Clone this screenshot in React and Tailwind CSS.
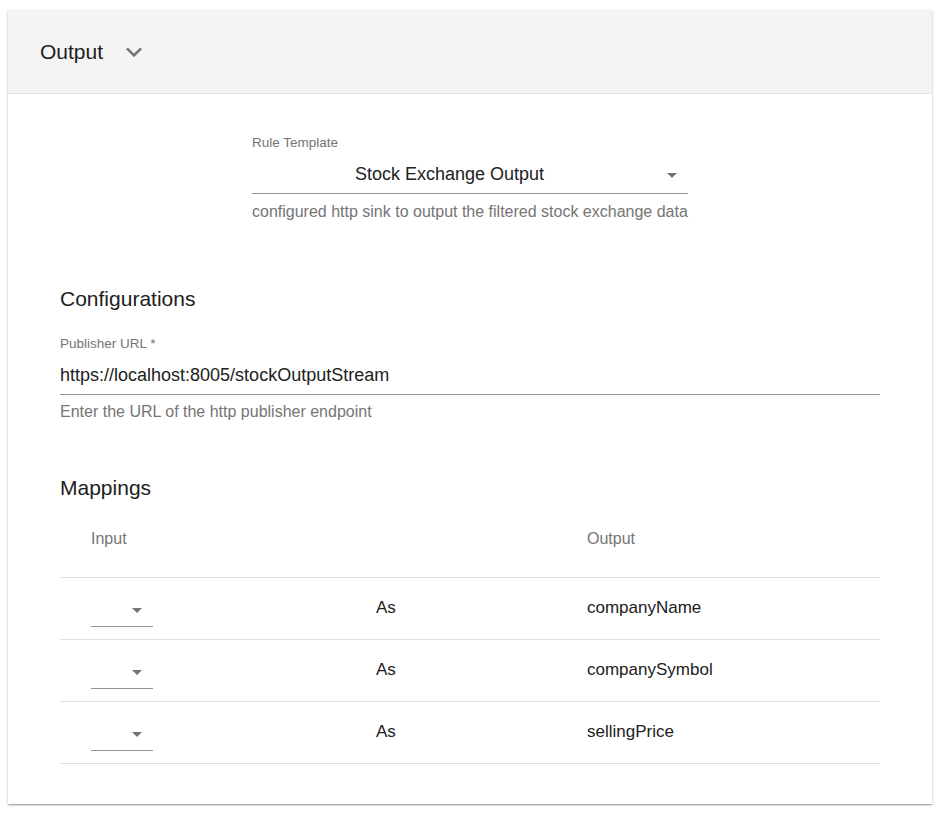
import React from "react";

// Flèche de liste déroulante (style Material)
function ArrowDropDown() {
  return (
    <svg width="24" height="24" viewBox="0 0 24 24" className="fill-[#757575]">
      <path d="M7 10l5 5 5-5z" />
    </svg>
  );
}

function ExpandMore() {
  return (
    <svg width="32" height="32" viewBox="0 0 24 24" className="fill-[#757575]">
      <path d="M16.59 8.59L12 13.17 7.41 8.59 6 10l6 6 6-6z" />
    </svg>
  );
}

const MAPPINGS = ["companyName", "companySymbol", "sellingPrice"];

export default function App() {
  return (
    <div className="min-h-screen bg-white pl-2 pt-[10px] font-['Liberation_Sans',Arial,sans-serif] text-[#212121]">
      <div className="w-[924px] bg-white shadow-[0_1px_3px_rgba(0,0,0,0.2),0_1px_1px_rgba(0,0,0,0.14),0_2px_1px_-1px_rgba(0,0,0,0.12)]">
        {/* En-tête */}
        <div className="flex h-[84px] items-center border-b border-[#e4e4e4] bg-[#f4f4f4] px-8">
          <span className="text-[21px] leading-7">Output</span>
          <span className="ml-[15px] mt-[1px]">
            <ExpandMore />
          </span>
        </div>

        <div className="px-[52px] pb-10">
          {/* Rule template */}
          <div className="mx-auto w-[436px] pt-[42px]">
            <div className="text-[13.5px] leading-[14px] text-[#757575]">Rule Template</div>
            <div className="mt-3 flex h-8 items-start border-b border-[#949494]">
              <span className="flex-1 pr-[13px] text-center text-[18px] leading-6">Stock Exchange Output</span>
              <span className="mr-[4px] mt-[1px]">
                <ArrowDropDown />
              </span>
            </div>
            <div className="mt-2 text-[16px] leading-5 text-[#757575]">
              configured http sink to output the filtered stock exchange data
            </div>
          </div>

          {/* Configurations */}
          <div className="mt-[63px] text-[21px] leading-7">Configurations</div>
          <div className="mt-6 text-[13.5px] leading-[14px] text-[#757575]">Publisher URL *</div>
          <div className="mt-3 h-8 border-b border-[#949494] text-[18px] leading-6">
            https://localhost:8005/stockOutputStream
          </div>
          <div className="mt-[7px] text-[16px] leading-5 text-[#757575]">
            Enter the URL of the http publisher endpoint
          </div>

          {/* Mappings */}
          <div className="mt-[52px] text-[21px] leading-7">Mappings</div>
          <div className="mt-[27px] grid grid-cols-[316px_211px_1fr] border-b border-[#e0e0e0] pb-[28px] text-[16px] leading-5 text-[#757575]">
            <div className="pl-[31px]">Input</div>
            <div />
            <div>Output</div>
          </div>
          {MAPPINGS.map((name) => (
            <div
              key={name}
              className="grid h-[62px] grid-cols-[316px_211px_1fr] items-center border-b border-[#e0e0e0] text-[17px] leading-6"
            >
              <div className="pl-[31px]">
                <div className="mt-[4px] flex h-8 w-[62px] items-center justify-end border-b border-[#949494] pr-[4px]">
                  <ArrowDropDown />
                </div>
              </div>
              <div className="-mt-[2px]">As</div>
              <div className="-mt-[2px]">{name}</div>
            </div>
          ))}
        </div>
      </div>
    </div>
  );
}
